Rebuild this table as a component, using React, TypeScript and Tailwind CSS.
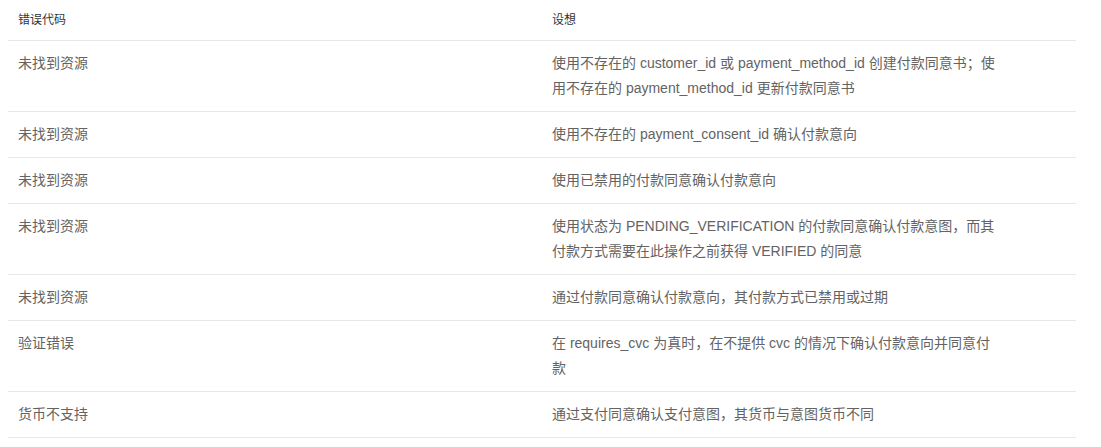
import React from 'react';

const rows: { code: string; desc: string }[] = [
  {
    code: '未找到资源',
    desc: '使用不存在的 customer_id 或 payment_method_id 创建付款同意书；使用不存在的 payment_method_id 更新付款同意书',
  },
  { code: '未找到资源', desc: '使用不存在的 payment_consent_id 确认付款意向' },
  { code: '未找到资源', desc: '使用已禁用的付款同意确认付款意向' },
  {
    code: '未找到资源',
    desc: '使用状态为 PENDING_VERIFICATION 的付款同意确认付款意图，而其付款方式需要在此操作之前获得 VERIFIED 的同意',
  },
  { code: '未找到资源', desc: '通过付款同意确认付款意向，其付款方式已禁用或过期' },
  { code: '验证错误', desc: '在 requires_cvc 为真时，在不提供 cvc 的情况下确认付款意向并同意付款' },
  { code: '货币不支持', desc: '通过支付同意确认支付意图，其货币与意图货币不同' },
];

const App: React.FC = () => {
  return (
    <div
      className="w-[1101px] h-[447px] bg-white pl-[8px] pr-[25px]"
      style={{ fontFamily: '"Liberation Sans", "Noto Sans CJK SC", sans-serif' }}
    >
      <table className="w-full border-collapse table-fixed">
        <thead>
          <tr className="border-b border-[#e8e8e8]">
            <th className="w-1/2 text-left font-normal text-[12px] leading-[20px] text-[#333] px-[10px] py-[10px]">
              错误代码
            </th>
            <th className="w-1/2 text-left font-normal text-[12px] leading-[20px] text-[#333] px-[10px] py-[10px]">
              设想
            </th>
          </tr>
        </thead>
        <tbody>
          {rows.map((r, i) => (
            <tr key={i} className="border-b border-[#e8e8e8]">
              <td className="align-top text-[14px] leading-[25px] text-[#636363] px-[10px] py-[10px]">
                {r.code}
              </td>
              <td className="align-top text-[14px] leading-[25px] text-[#636363] pl-[10px] pr-[76px] py-[10px]">
                {r.desc}
              </td>
            </tr>
          ))}
        </tbody>
      </table>
    </div>
  );
};

export default App;
